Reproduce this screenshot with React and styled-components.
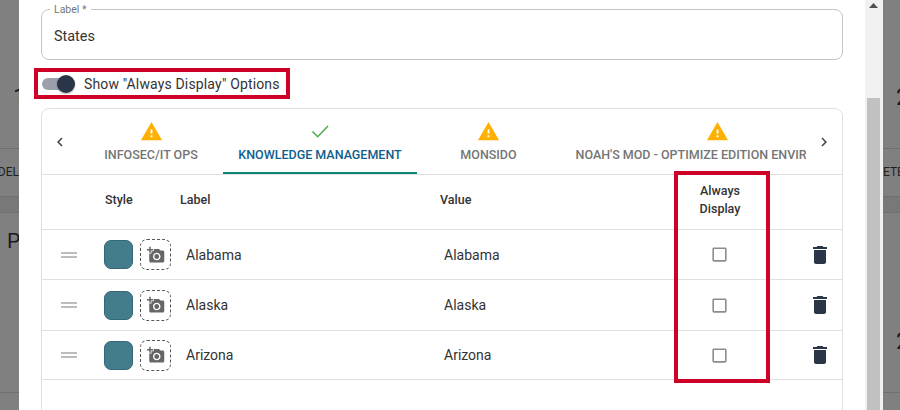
import React from "react";
import styled, { createGlobalStyle } from "styled-components";

const Global = createGlobalStyle`
  html, body { margin: 0; padding: 0; background: #808080; }
  body { font-family: Roboto, "Liberation Sans", sans-serif; color: #333; }
`;

const Page = styled.div`
  width: 900px; height: 410px; overflow: hidden; display: flex; background: #808080;
`;
const Backdrop = styled.div`
  width: ${p => p.$w}px; flex: none; overflow: hidden; display: flex; flex-direction: column;
  color: #1b1b1b;
`;
const BgGlyph = styled.div`
  height: ${p => p.$h}px; flex: none; font-size: ${p => p.$size || 24}px; line-height: 24px;
  white-space: nowrap; width: 100%; box-sizing: border-box; overflow: hidden;
  padding-left: ${p => p.$pl || 0}px; padding-top: ${p => p.$pt || 0}px;
`;
const BgHeader = styled.div`
  height: 49px; flex: none; width: 100%; border-top: 1px solid #6f6f6f; border-bottom: 1px solid #6f6f6f;
  box-sizing: border-box; font-size: 12px; line-height: 47px; color: #1f1f1f;
  display: flex; justify-content: ${p => (p.$right ? "flex-start" : "flex-end")};
`;
const BgBand = styled.div`height: 16px; width: 100%; flex: none; background: #787878; border-bottom: 1px solid #6f6f6f; box-sizing: border-box;`;
const BgRule = styled.div`height: 1px; width: 100%; flex: none; background: #6f6f6f;`;

const Modal = styled.div`
  width: 846px; flex: none; background: #fff; box-sizing: border-box; overflow: hidden;
  padding: 4px 22px 0 22px; display: flex; flex-direction: column; align-items: stretch;
`;
const Field = styled.fieldset`
  margin: 0; height: 56px; flex: none; box-sizing: border-box; border: 1px solid #c4c4c4; border-radius: 8px;
  padding: 0 12px; min-width: 0;
`;
const Legend = styled.legend`
  font-size: 10.5px; line-height: 11px; color: #757575; padding: 0 4px; margin-left: -4px;
`;
const FieldValue = styled.div`font-size: 14.4px; line-height: 20px; color: #333; margin-top: 12px;`;

const Highlight = styled.div`
  display: inline-flex; align-items: center; gap: 9px; align-self: flex-start; box-sizing: border-box;
  height: 31px; width: 256px; flex: none; border: 4px solid #cf0027; margin: 8px 0 9px -7px; padding-left: 4px;
`;
const Track = styled.span`
  width: 30px; height: 12px; border-radius: 6px; background: #9ba0aa; position: relative; flex: none;
  margin-right: 3px;
`;
const Thumb = styled.span`
  position: absolute; right: -3px; top: -3px; width: 18px; height: 18px; border-radius: 50%;
  background: #2b3548; box-shadow: 0 1px 2px rgba(0,0,0,.3);
`;
const ToggleText = styled.span`font-size: 14px; letter-spacing: 0.15px; color: #333; white-space: nowrap;`;

const Panel = styled.div`
  border: 1px solid #e0e0e0; border-radius: 8px; height: 340px; flex: none; position: relative;
`;
const TabBar = styled.div`
  display: flex; height: 66px; box-sizing: border-box; border-bottom: 1px solid #e0e0e0; align-items: stretch;
`;
const Arrow = styled.div`
  width: ${p => p.$w}px; flex: none; display: flex; align-items: center; justify-content: center;
  color: #444; padding-right: ${p => p.$pr || 0}px; box-sizing: border-box;
`;
const TabScroll = styled.div`flex: 1; min-width: 0; display: flex; overflow: hidden;`;
const Tab = styled.div`
  flex: none; width: ${p => p.$w}px; display: flex; flex-direction: column; align-items: center;
  box-sizing: border-box; padding-top: 10px; height: 65px; font-size: 12.5px; font-weight: 500;
  color: ${p => (p.$active ? "#0f5e8c" : "#757575")};
  border-bottom: ${p => (p.$active ? "2px solid #0a8870" : "none")};
  white-space: nowrap;
`;
const TabIcon = styled.div`height: 24px; display: flex; align-items: center; justify-content: center;`;
const TabLabel = styled.div`line-height: 16px; margin-top: 4px;`;

const Row = styled.div`
  display: grid; grid-template-columns: 62px 76px 260px 230px 100px 72px; align-items: center;
  height: ${p => p.$h}px; border-bottom: 1px solid #e0e0e0; box-sizing: border-box;
  padding-bottom: ${p => p.$pb || 0}px;
`;
const Head = styled.div`
  font-size: 12.5px; font-weight: 500; color: #333; padding-left: ${p => p.$pl || 0}px;
  text-align: ${p => (p.$center ? "center" : "left")}; line-height: 18px;
`;
const Handle = styled.div`display: flex; justify-content: center; padding-right: 9px; color: #bdbdbd;`;
const StyleCell = styled.div`display: flex; align-items: center; gap: 7px;`;
const Swatch = styled.div`
  width: 29px; height: 29px; box-sizing: border-box; border-radius: 7px; background: #437c8b; border: 1px solid #356878;
`;
const PhotoBox = styled.div`
  width: 31px; height: 31px; box-sizing: border-box; border: 1px dashed #555; border-radius: 7px;
  display: flex; align-items: center; justify-content: center; color: #666;
`;
const Text = styled.div`font-size: 14px; color: #333; padding-left: ${p => p.$pl}px;`;
const Center = styled.div`display: flex; justify-content: center; padding-right: 2px; color: #8c8c8c;`;
const Trash = styled.div`display: flex; justify-content: flex-end; padding-right: 10px; color: #2b3548;`;
const ColumnMark = styled.div`
  position: absolute; left: 632px; top: 62px; width: 96px; height: 212px; box-sizing: border-box;
  border: 4px solid #cf0027; pointer-events: none;
`;

const Scrollbar = styled.div`
  width: 18px; flex: none; background: #f1f1f1; display: flex; flex-direction: column; align-items: flex-start;
  padding-left: 2px; box-sizing: border-box;
`;
const ScrollUp = styled.div`height: 98px; flex: none; width: 13px; text-align: center; padding-top: 3px; box-sizing: border-box; color: #505050; line-height: 0;`;
const ScrollThumb = styled.div`width: 13px; flex: 1; background: #c1c1c1;`;

const Warn = ({ size = 23 }) => (
  <svg width={size} height={size} viewBox="0 0 24 24" fill="#ffb000"><path d="M1 21h22L12 2 1 21zm12-3h-2v-2h2v2zm0-4h-2v-4h2v4z" /></svg>
);
const Check = () => (
  <svg width="24" height="24" viewBox="0 0 24 24" fill="none" stroke="#4caf50" strokeWidth="1.6"><path d="M4.5 12.5l5.2 5.2L20 7" /></svg>
);
const Chevron = ({ right }) => (
  <svg width="18" height="18" viewBox="0 0 24 24" fill="currentColor">
    <path d={right ? "M10 6L8.59 7.41 13.17 12l-4.58 4.59L10 18l6-6z" : "M15.41 7.41L14 6l-6 6 6 6 1.41-1.41L10.83 12z"} />
  </svg>
);
const DragIcon = () => (
  <svg width="24" height="24" viewBox="0 0 24 24" fill="currentColor"><path d="M20 9H4v2h16V9zM4 15h16v-2H4v2z" /></svg>
);
const PhotoIcon = () => (
  <svg width="18" height="18" viewBox="0 0 24 24" fill="currentColor"><path d="M3 4V1h2v3h3v2H5v3H3V6H0V4h3zm3 6V7h3V4h7l1.83 2H21c1.1 0 2 .9 2 2v12c0 1.1-.9 2-2 2H5c-1.1 0-2-.9-2-2V10h3zm7 9c2.76 0 5-2.24 5-5s-2.24-5-5-5-5 2.24-5 5 2.24 5 5 5zm-3.2-5c0 1.77 1.43 3.2 3.2 3.2s3.2-1.43 3.2-3.2-1.43-3.2-3.2-3.2-3.2 1.43-3.2 3.2z" /></svg>
);
const BoxIcon = () => (
  <svg width="19" height="19" viewBox="0 0 24 24" fill="currentColor"><path d="M19 5v14H5V5h14m0-2H5c-1.1 0-2 .9-2 2v14c0 1.1.9 2 2 2h14c1.1 0 2-.9 2-2V5c0-1.1-.9-2-2-2z" /></svg>
);
const TrashIcon = () => (
  <svg width="24" height="24" viewBox="0 0 24 24" fill="currentColor"><path d="M6 19c0 1.1.9 2 2 2h8c1.1 0 2-.9 2-2V7H6v12zM19 4h-3.5l-1-1h-5l-1 1H5v2h14V4z" /></svg>
);

const states = ["Alabama", "Alaska", "Arizona"];

export default function App() {
  return (
    <Page>
      <Global />
      <Backdrop $w={19}>
        <BgGlyph $h={148} $pt={85} $pl={13}>1</BgGlyph>
        <BgHeader>DEL</BgHeader>
        <BgBand />
        <BgGlyph $h={55} $pt={16} $size={21} $pl={7}>P</BgGlyph>
        <BgGlyph $h={124} />
        <BgRule />
      </Backdrop>
      <Modal>
        <Field>
          <Legend>Label *</Legend>
          <FieldValue>States</FieldValue>
        </Field>
        <Highlight>
          <Track><Thumb /></Track>
          <ToggleText>Show "Always Display" Options</ToggleText>
        </Highlight>
        <Panel>
          <TabBar>
            <Arrow $w={37} $pr={2}><Chevron /></Arrow>
            <TabScroll>
              <Tab $w={144}><TabIcon><Warn /></TabIcon><TabLabel>INFOSEC/IT OPS</TabLabel></Tab>
              <Tab $w={194} $active><TabIcon><Check /></TabIcon><TabLabel>KNOWLEDGE MANAGEMENT</TabLabel></Tab>
              <Tab $w={143}><TabIcon><Warn /></TabIcon><TabLabel>MONSIDO</TabLabel></Tab>
              <Tab $w={314}><TabIcon><Warn /></TabIcon><TabLabel>NOAH'S MOD - OPTIMIZE EDITION ENVIRONMENT</TabLabel></Tab>
            </TabScroll>
            <Arrow $w={36}><Chevron right /></Arrow>
          </TabBar>
          <Row $h={55} $pb={4}>
            <span />
            <Head $pl={1}>Style</Head>
            <Head>Label</Head>
            <Head>Value</Head>
            <Head $center>Always<br />Display</Head>
            <span />
          </Row>
          {states.map((s, i) => (
            <Row key={s} $h={i === 0 ? 50 : i === 1 ? 51 : 49}>
              <Handle><DragIcon /></Handle>
              <StyleCell>
                <Swatch />
                <PhotoBox><PhotoIcon /></PhotoBox>
              </StyleCell>
              <Text $pl={6}>{s}</Text>
              <Text $pl={4}>{s}</Text>
              <Center><BoxIcon /></Center>
              <Trash><TrashIcon /></Trash>
            </Row>
          ))}
          <ColumnMark />
        </Panel>
      </Modal>
      <Scrollbar>
        <ScrollUp>
          <svg width="9" height="5" viewBox="0 0 9 5" fill="currentColor"><path d="M4.5 0L9 5H0z" /></svg>
        </ScrollUp>
        <ScrollThumb />
      </Scrollbar>
      <Backdrop $w={17}>
        <BgGlyph $h={148} $pt={85} $pl={13}>2</BgGlyph>
        <BgHeader $right>ETE</BgHeader>
        <BgBand />
        <BgGlyph $h={179} $pt={116} $pl={13}>2</BgGlyph>
        <BgRule />
      </Backdrop>
    </Page>
  );
}
